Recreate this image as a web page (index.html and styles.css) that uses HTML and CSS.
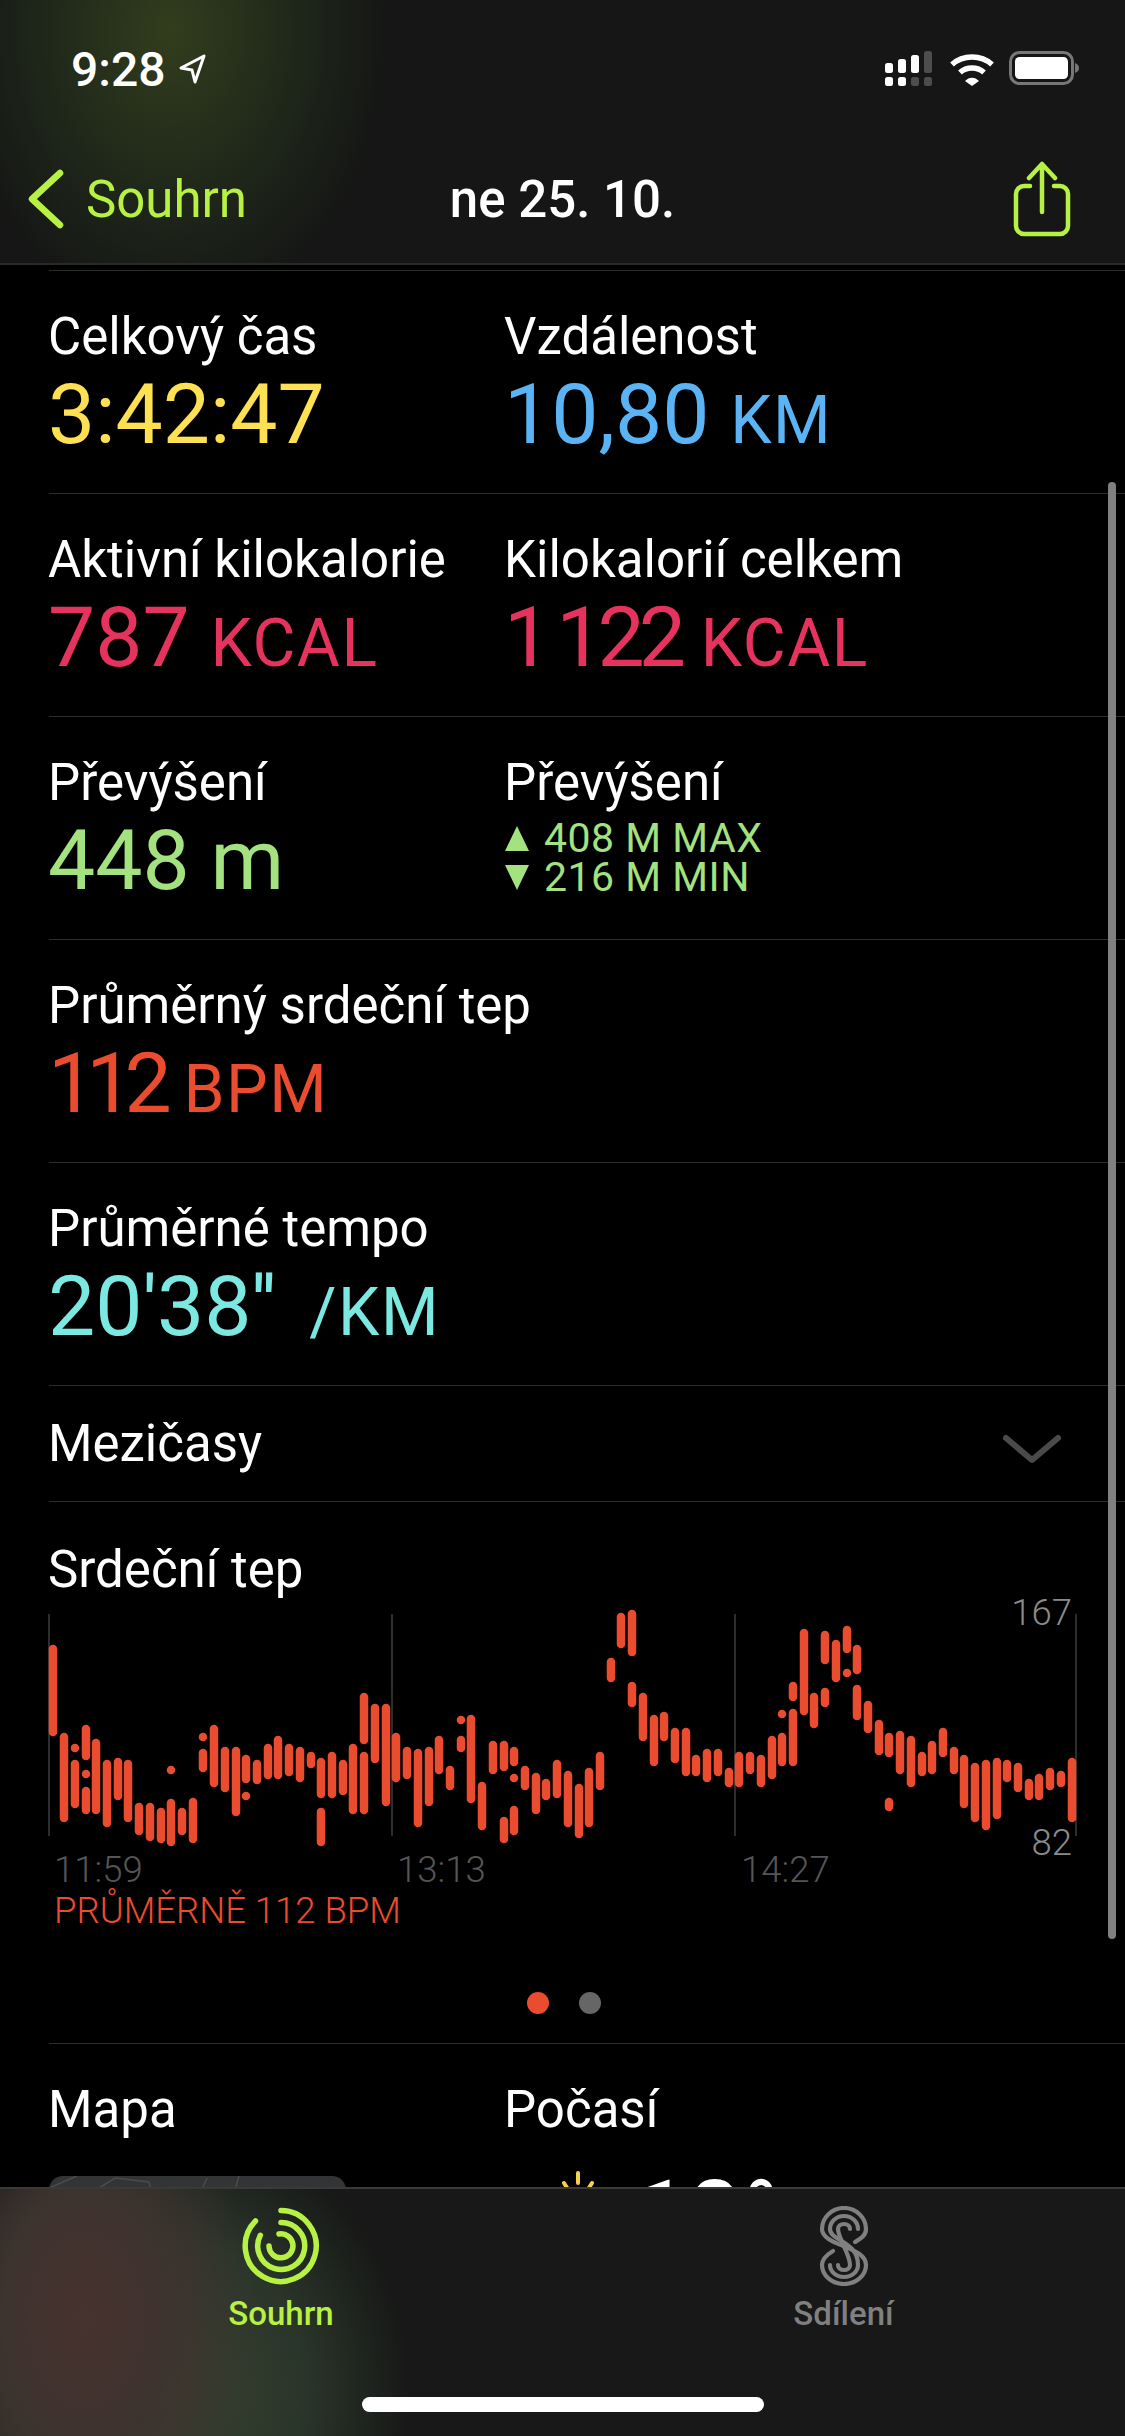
FILE: index.html
```html
<!DOCTYPE html>
<html lang="cs">
<head>
    <meta charset="UTF-8">
    <meta name="viewport" content="width=device-width, initial-scale=1.0">
    <title>Souhrn</title>
    <link rel="stylesheet" href="styles.css">
</head>
<body>
<div class="screen">
    <header class="top">
        <div class="status">
            <div class="clock">9:28
                <svg class="arrow" width="30" height="32" viewBox="0 0 30 32"><path d="M26 3 3 15l11 2 3 12z" fill="none" stroke="#fff" stroke-width="3" stroke-linejoin="round"/></svg>
            </div>
            <div class="status-icons">
                <svg width="50" height="36" viewBox="0 0 50 36">
                    <g fill="#fff">
                        <rect x="0" y="12" width="8" height="10" rx="2.5"/>
                        <rect x="13" y="8" width="8" height="14" rx="2.5"/>
                        <rect x="26" y="4" width="8" height="18" rx="2.5"/>
                        <rect x="0" y="26" width="8" height="9" rx="2.5"/>
                        <rect x="13" y="26" width="8" height="9" rx="2.5"/>
                    </g>
                    <g fill="#4d4d4d">
                        <rect x="39" y="0" width="8" height="22" rx="2.5"/>
                        <rect x="26" y="26" width="8" height="9" rx="2.5"/>
                        <rect x="39" y="26" width="8" height="9" rx="2.5"/>
                    </g>
                </svg>
                <svg width="46" height="36" viewBox="0 0 46 36" fill="none" stroke="#fff" stroke-width="5.5">
                    <path d="M3 13.5C14 3.5 32 3.5 43 13.5"/>
                    <path d="M11 21.5C17.500 15.500 28.500 15.500 35 21.500"/>
                    <path d="M16 30 23 35 30 30C26 25.500 20 25.500 16 30z" fill="#fff" stroke="none"/>
                </svg>
                <svg class="battery" width="70" height="36" viewBox="0 0 70 36">
                    <rect x="1.500" y="1.500" width="62" height="31" rx="9" fill="none" stroke="#777" stroke-width="3"/>
                    <rect x="6" y="6" width="53" height="22" rx="4.500" fill="#fff"/>
                    <path d="M66 12c3 1 4 3 4 5s-1 4-4 5z" fill="#777"/>
                </svg>
            </div>
        </div>
        <nav class="nav">
            <div class="back">
                <svg width="38" height="60" viewBox="0 0 38 60"><path d="M33 4 5 30l28 26" fill="none" stroke="#b6f144" stroke-width="6.500" stroke-linecap="round" stroke-linejoin="round"/></svg>
                <span>Souhrn</span>
            </div>
            <div class="nav-title">ne 25. 10.</div>
            <svg class="share" width="60" height="78" viewBox="0 0 60 78" fill="none" stroke="#b6f144" stroke-width="4.500" stroke-linecap="round" stroke-linejoin="round">
                <path d="M18 25H12a8 8 0 0 0-8 8v32a8 8 0 0 0 8 8h36a8 8 0 0 0 8-8V33a8 8 0 0 0-8-8h-6"/>
                <path d="M30 51V3M17 17 30 3l13 14"/>
            </svg>
        </nav>
    </header>

    <main class="content">
        <section class="row">
            <div>
                <div class="label">Celkový čas</div>
                <div class="value c-yellow">3:42:47</div>
            </div>
            <div>
                <div class="label">Vzdálenost</div>
                <div class="value c-blue">10,80 <span class="unit">KM</span></div>
            </div>
        </section>
        <section class="row">
            <div>
                <div class="label">Aktivní kilokalorie</div>
                <div class="value c-pink">787 <span class="unit">KCAL</span></div>
            </div>
            <div>
                <div class="label">Kilokalorií celkem</div>
                <div class="value c-pink"><span class="tight">1&#8201;122</span> <span class="unit">KCAL</span></div>
            </div>
        </section>
        <section class="row">
            <div>
                <div class="label">Převýšení</div>
                <div class="value c-green">448 m</div>
            </div>
            <div>
                <div class="label">Převýšení</div>
                <div class="elev c-green">
                    <div class="elev-line"><span class="tri tri-up"></span>408 M MAX</div>
                    <div class="elev-line"><span class="tri tri-down"></span>216 M MIN</div>
                </div>
            </div>
        </section>
        <section class="row row-wide">
            <div>
                <div class="label">Průměrný srdeční tep</div>
                <div class="value c-red"><span class="tighter">112</span> <span class="unit">BPM</span></div>
            </div>
        </section>
        <section class="row row-wide">
            <div>
                <div class="label">Průměrné tempo</div>
                <div class="value c-cyan">20'38'' <span class="unit unit-slash">/KM</span></div>
            </div>
        </section>
        <section class="splits">
            <div class="label">Mezičasy</div>
            <svg class="splits-arrow" width="60" height="30" viewBox="0 0 60 30"><path d="M4 4 30 26 56 4" fill="none" stroke="#4a4a4a" stroke-width="6" stroke-linecap="round" stroke-linejoin="round"/></svg>
        </section>
        <section class="heart">
            <div class="label">Srdeční tep</div>
            <svg class="chart" width="1125" height="360" viewBox="0 0 1125 360">
                <path class="grid" d="M49 24V246M392 24V246M735 24V246M1076 24V246"/>
                <path class="bars" d="M53 59V142M64 147V228M75 158v0M75 174V214M86 139V166M86 184v0M86 201V220M96 153V220M107 174V233M118 172V206M128 174V228M139 217V241M150 217V247M161 222V249M171 213V252M171 180v0M182 222V241M193 212V249M203 147v0M203 163V178M214 139V193M225 161V198M236 161V222M246 169V189M246 206v0M257 174V190M268 158V185M278 150V185M289 158V182M300 161V188M311 166V174M321 172V204M321 222V252M332 166V204M343 174V201M353 158V220M364 107V150M364 166V220M375 118V169M386 118V212M396 147V188M407 161V185M418 163V233M429 161V212M439 150V180M450 180V196M461 130v0M461 150V158M471 129V209M482 196V236M493 155V180M504 155V177M504 231V249M514 161V172M514 188v0M514 220V241M525 180V196M536 187V220M546 193V206M557 174V204M568 185V233M579 198V244M589 182V233M600 166V196M611 72V88M621 27V54M632 24V62M632 96V113M643 107V147M654 129V172M664 126V147M675 142V169M686 142V182M696 169V182M707 163V188M718 163V182M729 182V193M739 166V193M750 166V180M761 169V193M772 150V185M782 147V172M782 124v0M793 123V172M793 96V107M804 43V121M814 107V134M825 45V70M825 102V113M836 54V88M847 40V59M847 83v0M857 59V80M857 99V126M868 115V139M879 134V161M889 147V163M889 212V217M900 145V180M911 150V193M922 166V182M932 155V180M943 142V163M954 161V180M964 169V214M975 177V228M986 174V236M997 172V225M1007 174V188M1018 177V198M1029 193V206M1039 188V206M1050 182V196M1061 185V193M1072 172V228"/>
                <text class="t-range" x="1072" y="35" text-anchor="end">167</text>
                <text class="t-range" x="1072" y="265" text-anchor="end">82</text>
                <text class="t-time" x="54" y="292">11:59</text>
                <text class="t-time" x="397" y="292">13:13</text>
                <text class="t-time" x="741" y="292">14:27</text>
                <text class="t-avg" x="54" y="333">PRŮMĚRNĚ 112 BPM</text>
            </svg>
            <div class="pager">
                <span class="pager-dot is-on"></span>
                <span class="pager-dot"></span>
            </div>
        </section>
        <section class="row row-last">
            <div>
                <div class="label">Mapa</div>
                <div class="map">
                    <svg width="297" height="30" viewBox="0 0 297 30" fill="none" stroke="#4c4c4c" stroke-width="1.500"><path d="M0 12 28 0M50 12 66 2 100 6 102 14M150 20 158 2M190 0 186 14"/></svg>
                </div>
            </div>
            <div>
                <div class="label">Počasí</div>
                <div class="weather">
                    <svg class="sun" width="34" height="40" viewBox="0 0 34 40" stroke="#f5d24e" stroke-width="4" stroke-linecap="round"><path d="M17 3V13M3 13 8 21M31 13 26 21"/></svg>
                    <span class="temp">18°</span>
                </div>
            </div>
        </section>
    </main>

    <div class="scrollbar"></div>

    <footer class="tabs">
        <div class="tab is-active">
            <svg width="80" height="80" viewBox="0 0 80 80" fill="none" stroke="#b6f144" stroke-width="5.500" stroke-linecap="round">
                <path d="M40 4.500A35.500 35.500 0 1 1 14.500 15"/>
                <path d="M40 16.500A23.500 23.500 0 1 1 19.300 29.300"/>
                <path d="M38 28A12 12 0 1 1 28 40"/>
            </svg>
            <span>Souhrn</span>
        </div>
        <div class="tab">
            <svg width="80" height="80" viewBox="0 0 80 80" fill="none" stroke="#808080" stroke-width="4.200" stroke-linecap="round">
                <path d="M62 23A22 21 0 1 0 18 23C18 40 62 40 62 59A22 19 0 0 1 18 59"/>
                <path d="M54 23A14 13 0 1 0 26 23C26 35 54 35 54 59A14 12 0 0 1 26 59"/>
                <path d="M46 23A6 5 0 1 0 34 23C34 32 46 48 46 59A6 5 0 0 1 34 59"/>
                <path d="M18 59C18 52 24 48 29 45M62 23C62 30 56 33 51 36"/>
            </svg>
            <span>Sdílení</span>
        </div>
        <div class="home-bar"></div>
    </footer>
</div>
</body>
</html>
```

FILE: styles.css
```css
* {
    box-sizing: border-box;
}

body {
    margin: 0;
    background: #000;
    font-family: Roboto, "Liberation Sans", sans-serif;
    color: #fff;
}

.screen {
    position: relative;
    width: 1125px;
    height: 2436px;
    display: flex;
    flex-direction: column;
    overflow: hidden;
}

/* header */
.top {
    height: 265px;
    padding-top: 45px;
    border-bottom: 2px solid #2a2a2a;
    background: radial-gradient(ellipse 220px 290px at 170px 30px, #323d1d 0%, #20281a 55%, #151615 100%), #151515;
}

.status {
    height: 48px;
    padding: 0 46px 0 71px;
    display: flex;
    align-items: center;
    justify-content: space-between;
}

.clock {
    display: flex;
    align-items: center;
    gap: 12px;
    font-size: 48px;
    font-weight: 500;
}

.status-icons {
    display: flex;
    align-items: center;
    gap: 14px;
}

.nav {
    height: 170px;
    padding: 42px 53px 0 27px;
    display: flex;
    align-items: center;
    justify-content: space-between;
    position: relative;
}

.back {
    display: flex;
    align-items: center;
    gap: 21px;
    font-size: 51px;
    color: #b6f144;
}

.nav-title {
    font-size: 51px;
    font-weight: 500;
    position: absolute;
    left: 0;
    right: 0;
    text-align: center;
}

.share {
    margin-top: 2px;
}

/* list */
.content {
    flex: 1;
    overflow: hidden;
    padding-top: 5px;
}

.row {
    height: 223px;
    margin-left: 49px;
    padding-top: 36px;
    border-top: 1.500px solid #2c2c2c;
    display: grid;
    grid-template-columns: 456px 1fr;
}

.row-wide {
    grid-template-columns: 1fr;
}

.label {
    margin-left: -1px;
    font-size: 51px;
    line-height: 60px;
}

.value {
    margin-left: -1px;
    font-size: 84px;
    font-weight: 400;
    line-height: 96px;
}

.unit {
    font-size: 66px;
    font-weight: 400;
    letter-spacing: 1.500px;
}

.unit-slash {
    margin-left: 12px;
}

.tight {
    letter-spacing: -6px;
}

.tighter {
    letter-spacing: -9px;
}

.c-yellow { color: #fde153; }
.c-blue { color: #59b3f4; }
.c-pink { color: #e5335e; }
.c-green { color: #a3e27e; }
.c-red { color: #ea4c2f; }
.c-cyan { color: #7ce8e2; }

.elev {
    margin-top: 6px;
    font-size: 41px;
    line-height: 39px;
    letter-spacing: 0.5px;
}

.elev-line {
    display: flex;
    align-items: center;
    gap: 15px;
}

.tri {
    width: 0;
    height: 0;
    border-left: 12px solid transparent;
    border-right: 12px solid transparent;
}

.tri-up {
    border-bottom: 25px solid #a3e27e;
}

.tri-down {
    border-top: 25px solid #a3e27e;
}

.splits {
    height: 116px;
    margin-left: 49px;
    padding-right: 63px;
    border-top: 1.500px solid #2c2c2c;
    display: flex;
    align-items: center;
    justify-content: space-between;
}

.splits-arrow {
    margin-top: 10px;
}

/* heart rate */
.heart {
    height: 542px;
    margin-left: 49px;
    padding-top: 38px;
    border-top: 1.500px solid #2c2c2c;
}

.chart {
    display: block;
    margin-left: -49px;
    margin-top: -10px;
}

.grid {
    fill: none;
    stroke: #3c3c3c;
    stroke-width: 1.500;
}

.bars {
    fill: none;
    stroke: #ea4c2f;
    stroke-width: 8.500;
    stroke-linecap: round;
}

.chart text {
    font-family: Roboto, sans-serif;
    font-size: 36.500px;
    font-weight: 300;
}

.t-range { fill: #8a8a8a; }
.t-time { fill: #555; }
.t-avg { fill: #ea4c2f; }

.pager {
    margin-top: 42px;
    margin-left: 478px;
    display: flex;
    gap: 30px;
}

.pager-dot {
    width: 22px;
    height: 22px;
    border-radius: 50%;
    background: #666;
}

.pager-dot.is-on {
    background: #ea4c2f;
}

.row-last {
    height: auto;
}

.map {
    width: 297px;
    height: 60px;
    margin-top: 36px;
    border-radius: 14px 14px 0 0;
    background: #333435;
}

.map svg {
    display: block;
}

.weather {
    display: flex;
    align-items: flex-start;
    margin-top: 30px;
    padding-left: 56px;
    gap: 40px;
}

.temp {
    font-size: 88px;
    font-weight: 700;
    line-height: 84px;
    letter-spacing: 4px;
}

/* tab bar */
.tabs {
    position: relative;
    height: 249px;
    flex-shrink: 0;
    padding: 17px 0 0 0;
    display: grid;
    grid-template-columns: 562px 563px;
    border-top: 2px solid #3a3a3a;
    background: radial-gradient(ellipse 170px 260px at 85px 130px, #47322e 0%, #3d332e 50%, rgba(60, 60, 50, 0) 100%), radial-gradient(ellipse 240px 270px at 170px 200px, #374030 0%, #2b362a 55%, #171817 100%), #171717;
}

.tab {
    display: flex;
    flex-direction: column;
    align-items: center;
    height: 130px;
    gap: 8px;
    font-size: 33px;
    font-weight: 500;
    color: #808080;
}

.tab.is-active {
    color: #b6f144;
}

.home-bar {
    position: absolute;
    left: 362px;
    bottom: 24px;
    width: 402px;
    height: 15px;
    border-radius: 8px;
    background: #fff;
}

.scrollbar {
    position: absolute;
    left: 1108px;
    top: 482px;
    width: 8px;
    height: 1457px;
    border-radius: 4px;
    background: #808080;
}
```
